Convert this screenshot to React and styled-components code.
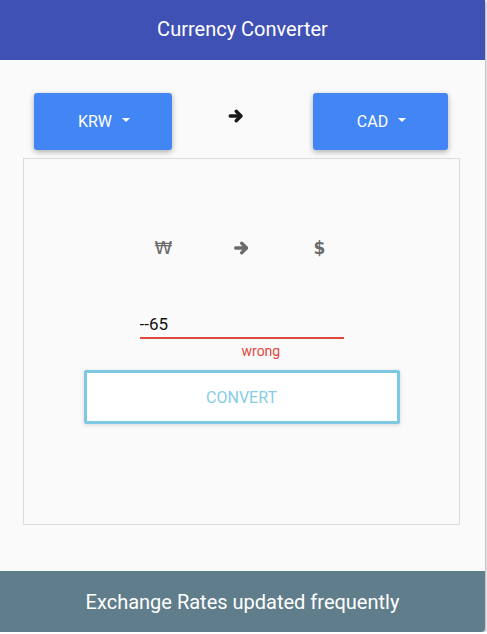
import React from "react";
import styled, { createGlobalStyle } from "styled-components";

const Global = createGlobalStyle`
  html, body { margin: 0; padding: 0; background: #ffffff; }
  body { font-family: Roboto, "Liberation Sans", Arial, sans-serif; }
  * { box-sizing: border-box; }
`;

const Card = styled.div`
  width: 485px;
  height: 632px;
  background: #fafafa;
  border-radius: 0 0 4px 0;
  box-shadow: 1px 1px 3px rgba(0, 0, 0, 0.35);
  display: flex;
  flex-direction: column;
  overflow: hidden;
`;

const Header = styled.header`
  height: 60px;
  flex: none;
  background: #3f51b5;
  color: #fff;
  font-size: 20px;
  display: flex;
  align-items: center;
  justify-content: center;
  padding-bottom: 2px;
`;

const Main = styled.main`
  flex: 1;
  padding-top: 33px;
`;

const SelectRow = styled.div`
  display: flex;
  align-items: flex-start;
  padding-left: 34px;
`;

const SelectButton = styled.button`
  width: ${(p) => p.$w}px;
  height: 57px;
  border: none;
  border-radius: 3px;
  background: #4285f4;
  color: #fff;
  font-family: Roboto, "Liberation Sans", Arial, sans-serif;
  font-size: 16px;
  display: flex;
  align-items: center;
  justify-content: center;
  gap: 10px;
  padding: 0 0 0 2px;
  box-shadow: 0 2px 5px rgba(0, 0, 0, 0.22), 0 2px 8px rgba(0, 0, 0, 0.1);
`;

const Caret = styled.span`
  width: 0;
  height: 0;
  border-left: 4.5px solid transparent;
  border-right: 4.5px solid transparent;
  border-top: 4px solid #fff;
  margin-top: -3px;
`;

const TopArrow = styled.div`
  margin: 15px 69px 0 56px;
  width: 16px;
  height: 16px;
  display: flex;
  color: #1a1a1a;
`;

const Panel = styled.section`
  margin: 8px 0 0 23px;
  width: 437px;
  height: 367px;
  border: 1px solid #dcdcdc;
  display: flex;
  flex-direction: column;
  align-items: center;
  padding-top: 79px;
`;

const SymbolRow = styled.div`
  display: grid;
  grid-template-columns: repeat(3, 40px);
  column-gap: 38px;
  align-items: center;
  justify-items: center;
  color: #6b6b6b;
  height: 20px;
`;

const Symbol = styled.span`
  font-family: "DejaVu Sans", sans-serif;
  font-weight: ${(p) => p.$weight};
  font-size: ${(p) => p.$size}px;
  line-height: 20px;
`;

const MidArrow = styled.span`
  display: flex;
  width: 17px;
  height: 16px;
  color: #6b6b6b;
`;

const Field = styled.div`
  margin-top: 55px;
  width: 204px;
  display: flex;
  flex-direction: column;
`;

const Input = styled.input`
  width: 204px;
  height: 26px;
  border: none;
  border-bottom: 2px solid #e0483e;
  background: transparent;
  font-family: Roboto, "Liberation Sans", Arial, sans-serif;
  font-size: 17px;
  color: #111;
  padding: 0 0 2px 0;
  outline: none;
`;

const ErrorText = styled.span`
  color: #e0483e;
  font-size: 14px;
  padding-left: 102px;
  margin-top: 4px;
  line-height: 16px;
`;

const ConvertButton = styled.button`
  margin-top: 11px;
  width: 316px;
  height: 54px;
  border: 3px solid #7ec8e3;
  border-radius: 2px;
  background: #fff;
  color: #85cce5;
  font-family: Roboto, "Liberation Sans", Arial, sans-serif;
  font-size: 16px;
  box-shadow: 0 1px 4px rgba(0, 0, 0, 0.15);
`;

const Footer = styled.footer`
  height: 61px;
  flex: none;
  background: #607d8b;
  color: #fff;
  font-size: 20px;
  display: flex;
  align-items: center;
  justify-content: center;
`;

const Arrow = () => (
  <svg viewBox="0 0 16 16" width="100%" height="100%" fill="none" stroke="currentColor"
       strokeWidth="3.4" strokeLinecap="round" strokeLinejoin="round">
    <path d="M2.2 8 H12.6" />
    <path d="M8.2 3.2 L13 8 L8.2 12.8" />
  </svg>
);

export default function App() {
  return (
    <>
      <Global />
      <Card>
        <Header>Currency Converter</Header>
        <Main>
          <SelectRow>
            <SelectButton $w={138}>
              KRW <Caret />
            </SelectButton>
            <TopArrow>
              <Arrow />
            </TopArrow>
            <SelectButton $w={135}>
              CAD <Caret />
            </SelectButton>
          </SelectRow>
          <Panel>
            <SymbolRow>
              <Symbol $size={18} $weight="normal">₩</Symbol>
              <MidArrow>
                <Arrow />
              </MidArrow>
              <Symbol $size={17} $weight="bold">$</Symbol>
            </SymbolRow>
            <Field>
              <Input defaultValue="--65" />
              <ErrorText>wrong</ErrorText>
            </Field>
            <ConvertButton>CONVERT</ConvertButton>
          </Panel>
        </Main>
        <Footer>Exchange Rates updated frequently</Footer>
      </Card>
    </>
  );
}
